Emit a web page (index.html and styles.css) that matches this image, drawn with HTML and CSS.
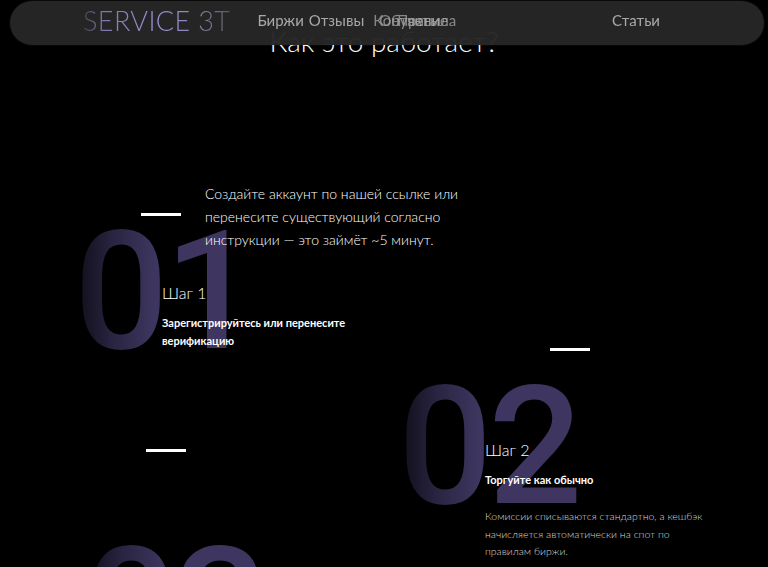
FILE: index.html
```html
<!DOCTYPE html>
<html lang="ru">
<head>
    <meta charset="UTF-8">
    <meta name="viewport" content="width=device-width, initial-scale=1.0">
    <title>SERVICE 3T — Как это работает?</title>
    <link rel="stylesheet" href="styles.css">
</head>
<body>
    <header class="navbar">
        <div class="logo">SERVICE 3T</div>
        <nav class="menu">
            <a href="#">Биржи</a>
            <a href="#">Отзывы</a>
            <div class="menu-stack">
                <a href="#">Контакты</a>
                <a href="#">Обучение</a>
                <a href="#">Правила</a>
            </div>
        </nav>
        <a class="menu-last" href="#">Статьи</a>
    </header>

    <h2 class="section-title">Как это работает?</h2>

    <div class="steps">
        <div class="step step-one">
            <div class="step-num">01</div>
            <div class="step-head">
                <span class="dash"></span>
                <p class="step-lead">Создайте аккаунт по нашей ссылке или<br>перенесите существующий согласно<br>инструкции — это займёт ~5 минут.</p>
            </div>
            <div class="step-body">
                <h3>Шаг 1</h3>
                <p class="step-title">Зарегистрируйтесь или перенесите<br>верификацию</p>
            </div>
        </div>

        <div class="step step-two">
            <span class="dash"></span>
            <div class="step-num">02</div>
            <div class="step-body">
                <h3>Шаг 2</h3>
                <p class="step-title">Торгуйте как обычно</p>
                <p class="step-text">Комиссии списываются стандартно, а кешбэк<br>начисляется автоматически на спот по<br>правилам биржи.</p>
            </div>
        </div>

        <div class="step step-three">
            <span class="dash"></span>
            <div class="step-num">03</div>
        </div>
    </div>
</body>
</html>
```

FILE: styles.css
```css
body {
    margin: 0;
    background-color: #000;
    color: #fff;
    font-family: "Lato", "Noto Sans", sans-serif;
}
a {
    color: inherit;
    text-decoration: none;
}

/* top bar */
.navbar {
    position: fixed;
    top: 1px;
    left: 10px;
    right: 4px;
    height: 44px;
    box-sizing: border-box;
    border-radius: 22px;
    background-color: rgba(38, 38, 38, 0.97);
    box-shadow: 0 0 0 1px rgba(255, 255, 255, 0.03);
    display: flex;
    align-items: center;
    padding: 0 104px 6px 73px;
    z-index: 10;
}
.logo {
    font-size: 27px;
    font-weight: 300;
    letter-spacing: 0.4px;
    background: linear-gradient(90deg, #47474b 0%, #7d77b0 14%, #9891d4 50%, #8a86b0 78%, #58585a 100%);
    -webkit-background-clip: text;
    background-clip: text;
    color: transparent;
}
.menu {
    display: flex;
    align-items: center;
    gap: 5px;
    margin-left: 27px;
    font-size: 15px;
    color: #a8a8a8;
}
.menu-stack {
    position: relative;
    width: 90px;
    height: 20px;
    margin-left: 4px;
}
.menu-stack a {
    position: absolute;
    top: 0;
    line-height: 20px;
    opacity: 0.75;
}
.menu-stack a:nth-child(2) {
    left: 6px;
}
.menu-stack a:nth-child(3) {
    left: 24px;
}
.menu-last {
    margin-left: auto;
    font-size: 15px;
    color: #a8a8a8;
}

.section-title {
    margin: 22px 0 0;
    text-align: center;
    font-size: 28px;
    font-weight: 300;
    line-height: 38px;
}

/* steps */
.steps {
    display: grid;
    grid-template-columns: 384px 384px;
    grid-template-rows: 166px 101px 140px;
    margin-top: 122px;
}
.step {
    position: relative;
}
.step-num {
    position: absolute;
    font-family: "Roboto", sans-serif;
    font-weight: 500;
    font-size: 166px;
    line-height: 1;
    letter-spacing: -4px;
    background: linear-gradient(90deg, #0f0c17 0%, #2a2542 22%, #3e3660 45%, #3e3660 100%);
    -webkit-background-clip: text;
    background-clip: text;
    color: transparent;
    z-index: 0;
}
.dash {
    display: block;
    flex-shrink: 0;
    width: 40px;
    height: 3px;
    background-color: #fff;
}
.step-body {
    position: relative;
    z-index: 1;
}
.step-body h3 {
    margin: 0;
    font-size: 16px;
    font-weight: 300;
    line-height: 22px;
}
.step-title {
    margin: 10px 0 0;
    font-size: 11px;
    font-weight: 700;
    line-height: 18px;
}
.step-text {
    margin: 19px 0 0;
    font-size: 10.5px;
    font-weight: 300;
    line-height: 17.5px;
    color: #d6d6d6;
}

.step-one {
    grid-column: 1;
    grid-row: 1;
}
.step-one .step-num {
    top: 27px;
    left: 74px;
}
.step-head {
    display: flex;
    align-items: flex-start;
    gap: 24px;
    padding-left: 141px;
    position: relative;
    z-index: 1;
}
.step-head .dash {
    margin-top: 31px;
}
.step-lead {
    margin: 0;
    font-size: 14px;
    font-weight: 300;
    line-height: 23px;
    white-space: nowrap;
}
.step-one .step-body {
    margin: 31px 0 0 162px;
}

.step-two {
    grid-column: 2;
    grid-row: 2 / 4;
}
.step-two .dash {
    margin-left: 166px;
}
.step-two .step-num {
    top: 16px;
    left: 14px;
}
.step-two .step-body {
    margin: 88px 0 0 101px;
}

.step-three {
    grid-column: 1;
    grid-row: 3;
}
.step-three .dash {
    margin-left: 146px;
}
.step-three .step-num {
    top: 76px;
    left: 84px;
}
```
